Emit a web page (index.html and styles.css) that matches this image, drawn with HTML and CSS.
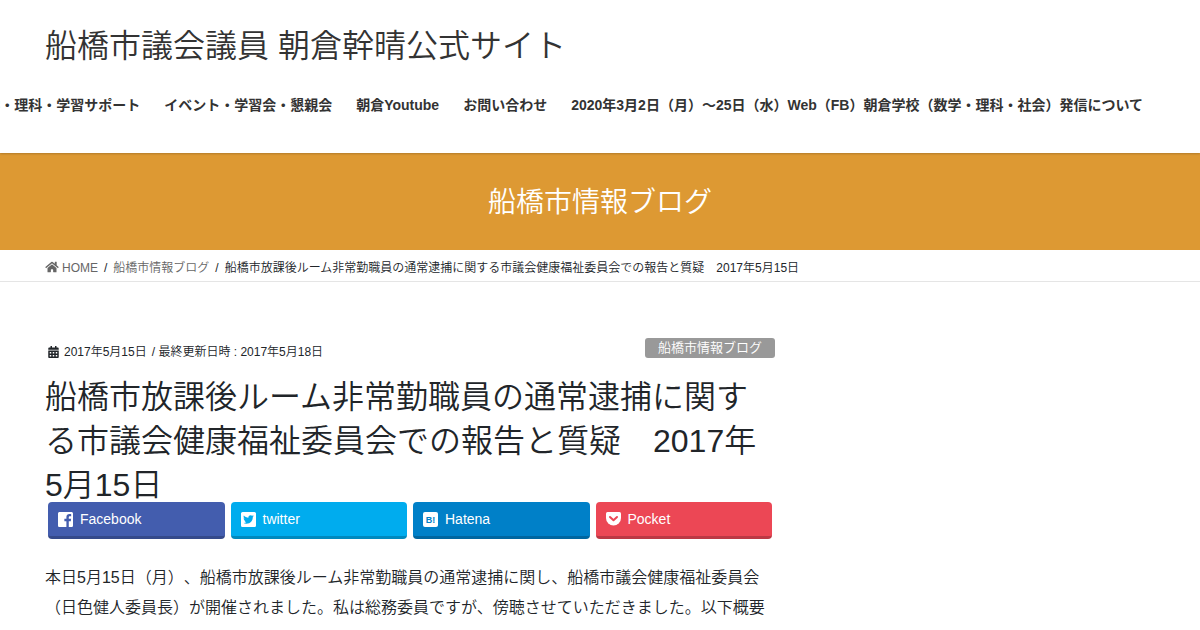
FILE: index.html
```
<!DOCTYPE html>
<html lang="ja">
<head>
    <meta charset="UTF-8">
    <meta name="viewport" content="width=device-width, initial-scale=1.0">
    <title>船橋市放課後ルーム非常勤職員の通常逮捕に関する市議会健康福祉委員会での報告と質疑 | 船橋市議会議員 朝倉幹晴公式サイト</title>
    <link rel="stylesheet" href="styles.css">
</head>
<body>
    <header class="site-header">
        <div class="container">
            <p class="site-title"><a href="#">船橋市議会議員 朝倉幹晴公式サイト</a></p>
            <nav class="global-nav">
                <a href="#">数学・理科・学習サポート</a>
                <a href="#">イベント・学習会・懇親会</a>
                <a href="#">朝倉Youtube</a>
                <a href="#">お問い合わせ</a>
                <a href="#">2020年3月2日（月）～25日（水）Web（FB）朝倉学校（数学・理科・社会）発信について</a>
            </nav>
        </div>
    </header>

    <div class="page-header">船橋市情報ブログ</div>

    <nav class="breadcrumb">
        <ol class="container">
            <li><a href="#"><svg class="icon-home" viewBox="0 0 576 512"><path d="M280.37 148.26L96 300.11V464a16 16 0 0 0 16 16l112.06-.29a16 16 0 0 0 15.92-16V368a16 16 0 0 1 16-16h64a16 16 0 0 1 16 16v95.64a16 16 0 0 0 16 16.05L464 480a16 16 0 0 0 16-16V300L295.67 148.26a12.19 12.19 0 0 0-15.3 0zM571.6 251.47L488 182.56V44.05a12 12 0 0 0-12-12h-56a12 12 0 0 0-12 12v72.61L318.47 43a48 48 0 0 0-61 0L4.34 251.47a12 12 0 0 0-1.6 16.9l25.5 31A12 12 0 0 0 45.15 301l235.22-193.74a12.19 12.19 0 0 1 15.3 0L530.9 301a12 12 0 0 0 16.9-1.6l25.5-31a12 12 0 0 0-1.7-16.93z"/></svg>HOME</a></li>
            <li><a href="#">船橋市情報ブログ</a></li>
            <li>船橋市放課後ルーム非常勤職員の通常逮捕に関する市議会健康福祉委員会での報告と質疑　2017年5月15日</li>
        </ol>
    </nav>

    <div class="container">
        <main class="main-section">
            <article>
                <div class="entry-meta">
                    <svg class="icon-calendar" viewBox="0 0 448 512"><path fill-rule="evenodd" d="M0 160v-48c0-26 22-48 48-48h48V12c0-7 5-12 12-12h40c7 0 12 5 12 12v52h128V12c0-7 5-12 12-12h40c7 0 12 5 12 12v52h48c26 0 48 22 48 48v48zM0 192h448v272c0 26-22 48-48 48H48c-26 0-48-22-48-48zM64 256v64h64v-64zM192 256v64h64v-64zM320 256v64h64v-64zM64 384v64h64v-64zM192 384v64h64v-64zM320 384v64h64v-64z"/></svg>
                    <span class="entry-date">2017年5月15日</span>
                    <span>/ 最終更新日時 : 2017年5月18日</span>
                    <a class="entry-category" href="#">船橋市情報ブログ</a>
                </div>
                <h1 class="entry-title">船橋市放課後ルーム非常勤職員の通常逮捕に関する市議会健康福祉委員会での報告と質疑　2017年5月15日</h1>

                <ul class="share">
                    <li><a class="facebook" href="#"><svg viewBox="0 0 448 448"><path d="M48 0h352c27 0 48 21 48 48v352c0 27-21 48-48 48h-78V274h60l9-70h-69v-44c0-20 6-34 35-34h36V64c-6-1-28-3-53-3-53 0-89 32-89 92v51h-61v70h61v174H48c-27 0-48-21-48-48V48C0 21 21 0 48 0z"/></svg>Facebook</a></li>
                    <li><a class="twitter" href="#"><svg viewBox="0 32 448 448"><path d="M400 32H48C21.5 32 0 53.5 0 80v352c0 26.5 21.5 48 48 48h352c26.5 0 48-21.5 48-48V80c0-26.5-21.5-48-48-48zm-48.9 158.8c.2 2.8.2 5.7.2 8.5 0 86.7-66 186.6-186.6 186.6-37.2 0-71.7-10.8-100.7-29.4 5.3.6 10.4.8 15.8.8 30.7 0 58.9-10.4 81.4-28-28.8-.6-53-19.5-61.3-45.5 10.1 1.5 19.2 1.5 29.6-1.2-30-6.1-52.5-32.5-52.5-64.4v-.8c8.7 4.9 18.9 7.9 29.6 8.3a65.447 65.447 0 0 1-29.2-54.6c0-12.2 3.2-23.4 8.9-33.1 32.3 39.8 80.8 65.8 135.2 68.6-9.3-44.5 24-80.6 64-80.6 18.9 0 35.9 7.9 47.9 20.7 14.8-2.8 29-8.3 41.6-15.8-4.9 15.2-15.2 28-28.8 36.1 13.2-1.4 26-5.1 37.8-10.2-8.9 13.1-20.1 24.7-32.9 34z"/></svg>twitter</a></li>
                    <li><a class="hatena" href="#"><svg viewBox="0 0 15 15"><rect width="15" height="15" rx="2"/><text x="7.5" y="10.5" text-anchor="middle">B!</text></svg>Hatena</a></li>
                    <li><a class="pocket" href="#"><svg viewBox="0 0 15 15"><path d="M1.500 0h12Q15 0 15 1.500v4.500a7.500 7.500 0 0 1-15 0V1.500Q0 0 1.500 0z"/><path class="check" d="M4 5l3.500 3.300L11 5"/></svg>Pocket</a></li>
                </ul>

                <div class="entry-body">
                    <p>本日5月15日（月）、船橋市放課後ルーム非常勤職員の通常逮捕に関し、船橋市議会健康福祉委員会（日色健人委員長）が開催されました。私は総務委員ですが、傍聴させていただきました。以下概要です。</p>
                </div>
            </article>
        </main>
    </div>
</body>
</html>
```
FILE: styles.css
```
* {
    box-sizing: border-box;
}

body {
    margin: 0;
    font-family: "Liberation Sans", "Noto Sans CJK JP", sans-serif;
    font-size: 16px;
    font-weight: 350;
    line-height: 30px;
    text-spacing-trim: space-all;
    color: #212529;
    background: #fff;
    overflow-x: hidden;
}

a {
    color: inherit;
    text-decoration: none;
}

svg {
    fill: currentColor;
    flex-shrink: 0;
}

.container {
    width: 100%;
    max-width: 1140px;
    margin: 0 auto;
    padding: 0 15px;
}

/* ヘッダー */
.site-header {
    position: relative;
    padding: 23px 0 20px;
    background: #fff;
    color: #333;
    box-shadow: 0 1px 2px rgba(0, 0, 0, 0.2);
}

.site-title {
    margin: 0;
    font-size: 32px;
    line-height: 46px;
}

.global-nav {
    display: flex;
    justify-content: flex-end;
    padding: 29px 0 20px;
    font-size: 14px;
    font-weight: bold;
    line-height: 15px;
}

.global-nav a {
    padding: 0 12px;
    white-space: nowrap;
    flex-shrink: 0;
}

.page-header {
    padding: 30px 0 27px;
    background: #dd9933;
    color: #fff;
    font-size: 28px;
    line-height: 40px;
    text-align: center;
}

/* パンくずリスト */
.breadcrumb {
    border-bottom: 1px solid #e5e5e5;
    font-size: 12px;
    line-height: 18px;
}

.breadcrumb ol {
    display: flex;
    padding-top: 9px;
    padding-bottom: 4px;
    list-style: none;
}

.breadcrumb li + li::before {
    content: "/";
    padding: 0 6px;
}

.breadcrumb a {
    color: #666;
}

.icon-home {
    width: 14px;
    height: 12px;
    margin-right: 3px;
    vertical-align: -1px;
}

/* 記事 */
.main-section {
    max-width: 730px;
    padding-top: 56px;
}

.entry-meta {
    display: flex;
    align-items: center;
    padding-left: 3px;
    font-size: 12px;
    line-height: 28px;
}

.icon-calendar {
    width: 11px;
    height: 12px;
    margin-right: 5px;
}

.entry-date {
    margin-right: 5px;
}

.entry-category {
    align-self: flex-start;
    margin-left: auto;
    padding: 0 13px;
    border-radius: 3px;
    background: #999;
    color: #fff;
    font-size: 13px;
    line-height: 20px;
}

.entry-title {
    margin: 9px 0 -5px;
    padding-right: 10px;
    font-size: 32px;
    font-weight: 350;
    line-height: 44px;
}

.share {
    display: flex;
    gap: 6px;
    margin: 0;
    padding: 0 3px;
    list-style: none;
}

.share li {
    flex: 1;
}

.share a {
    display: flex;
    align-items: center;
    gap: 7px;
    padding: 0 10px;
    border-bottom: 3px solid rgba(0, 0, 0, 0.2);
    border-radius: 4px;
    color: #fff;
    font-size: 14px;
    line-height: 34px;
}

.share svg {
    width: 15px;
    height: 15px;
}

.facebook {
    background: #435dae;
}

.twitter {
    background: #00acee;
}

.hatena {
    background: #0080c8;
}

.hatena text {
    fill: #0080c8;
    font-size: 9px;
    font-weight: bold;
}

.pocket {
    background: #ec4755;
}

.pocket .check {
    fill: none;
    stroke: #ec4755;
    stroke-width: 2;
    stroke-linecap: round;
    stroke-linejoin: round;
}

.entry-body p {
    margin: 24px 0 0;
}
```
